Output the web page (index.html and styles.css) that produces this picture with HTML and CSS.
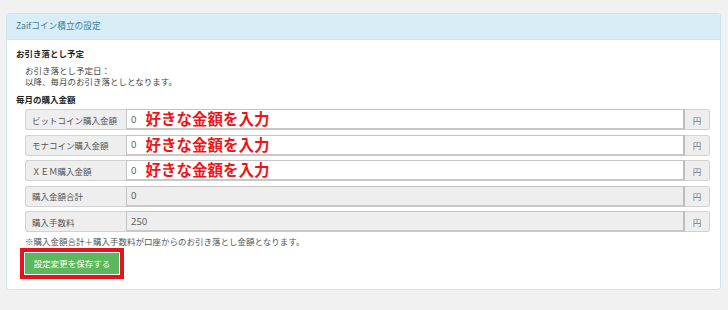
FILE: index.html
```html
<!DOCTYPE html>
<html lang="ja">
<head>
<meta charset="utf-8">
<link rel="stylesheet" href="styles.css">
</head>
<body>
<div class="panel">
  <div class="panel-heading">Zaifコイン積立の設定</div>
  <div class="panel-body">
    <div class="section-title first">お引き落とし予定</div>
    <div class="schedule">
      <div>お引き落とし予定日：</div>
      <div>以降、毎月のお引き落としとなります。</div>
    </div>
    <div class="section-title second">毎月の購入金額</div>
    <div class="rows">
      <div class="input-group">
        <div class="addon label">ビットコイン購入金額</div>
        <div class="field"><span class="val">0</span><span class="hint">好きな金額を入力</span></div>
        <div class="addon unit">円</div>
      </div>
      <div class="input-group">
        <div class="addon label">モナコイン購入金額</div>
        <div class="field"><span class="val">0</span><span class="hint">好きな金額を入力</span></div>
        <div class="addon unit">円</div>
      </div>
      <div class="input-group">
        <div class="addon label">ＸＥＭ購入金額</div>
        <div class="field"><span class="val">0</span><span class="hint">好きな金額を入力</span></div>
        <div class="addon unit">円</div>
      </div>
      <div class="input-group">
        <div class="addon label">購入金額合計</div>
        <div class="field disabled"><span class="val">0</span></div>
        <div class="addon unit">円</div>
      </div>
      <div class="input-group">
        <div class="addon label">購入手数料</div>
        <div class="field disabled"><span class="val">250</span></div>
        <div class="addon unit">円</div>
      </div>
    </div>
    <div class="note">※購入金額合計＋購入手数料が口座からのお引き落とし金額となります。</div>
    <div class="actions">
      <span class="highlight"><button class="btn-save" type="button">設定変更を保存する</button></span>
    </div>
  </div>
</div>
</body>
</html>
```

FILE: styles.css
```css
html, body {
  margin: 0;
  padding: 0;
}
body {
  background: #f1f1f1;
  font-family: "Noto Sans CJK JP", "Open Sans", sans-serif;
  color: #333;
  padding: 13px 8px 0 6px;
  width: 728px;
  box-sizing: border-box;
}
.panel {
  width: 715px;
  background: #fff;
  border: 1px solid #c9e6f1;
  border-radius: 3px;
  box-sizing: border-box;
}
.panel-heading {
  height: 25px;
  line-height: 24px;
  padding-left: 9px;
  background: #d9edf7;
  border-bottom: 1px solid #c9e6f1;
  color: #3f7d9c;
  font-size: 8.7px;
  border-radius: 2px 2px 0 0;
}
.panel-body {
  padding: 7px 9px 12px 9px;
}
.section-title {
  font-size: 8.5px;
  font-weight: bold;
  line-height: 12px;
  color: #222;
}
.schedule {
  margin: 6px 0 0 9px;
  font-size: 8.5px;
  line-height: 11px;
  color: #444;
}
.section-title.second {
  margin-top: 6px;
}
.rows {
  margin: 4px 0 0 9px;
  display: flex;
  flex-direction: column;
  gap: 4.5px;
  width: 685px;
}
.input-group {
  display: flex;
  height: 21px;
}
.addon {
  background: #eee;
  border: 1px solid #d2d2d2;
  box-sizing: border-box;
  display: flex;
  align-items: center;
  font-size: 8.5px;
  color: #555;
}
.addon.label {
  width: 101px;
  padding-left: 6px;
  border-radius: 3px 0 0 3px;
  border-right: none;
}
.addon.unit {
  width: 25px;
  justify-content: center;
  border-left: none;
  border-radius: 0 3px 3px 0;
  color: #777;
}
.field {
  flex: 1;
  border: 1px solid #c4c4c4;
  border-right: 2px solid #bdbdbd;
  border-bottom: 2px solid #c8c8c8;
  box-sizing: border-box;
  background: #fff;
  display: flex;
  align-items: center;
  padding-left: 4px;
  font-family: "Open Sans", "Noto Sans CJK JP", sans-serif;
}
.field.disabled {
  background: #eee;
}
.val {
  font-size: 9.5px;
  color: #555;
}
.hint {
  margin-left: 9px;
  font-family: "Noto Sans CJK JP", sans-serif;
  font-size: 15.5px;
  font-weight: bold;
  color: #f01418;
  line-height: 1;
}
.note {
  margin: 3.5px 0 0 9px;
  font-size: 8.5px;
  line-height: 11px;
  color: #555;
}
.actions {
  margin: 6px 0 0 9px;
}
.highlight {
  display: inline-block;
  vertical-align: top;
}
.btn-save {
  display: block;
  width: 94px;
  height: 21px;
  padding: 0;
  border: none;
  border-radius: 0;
  background: #5cb85c;
  color: #fff;
  font-family: "Noto Sans CJK JP", sans-serif;
  font-size: 8.5px;
  outline: 4.5px solid #e3141c;
  outline-offset: 1.5px;
}
```
